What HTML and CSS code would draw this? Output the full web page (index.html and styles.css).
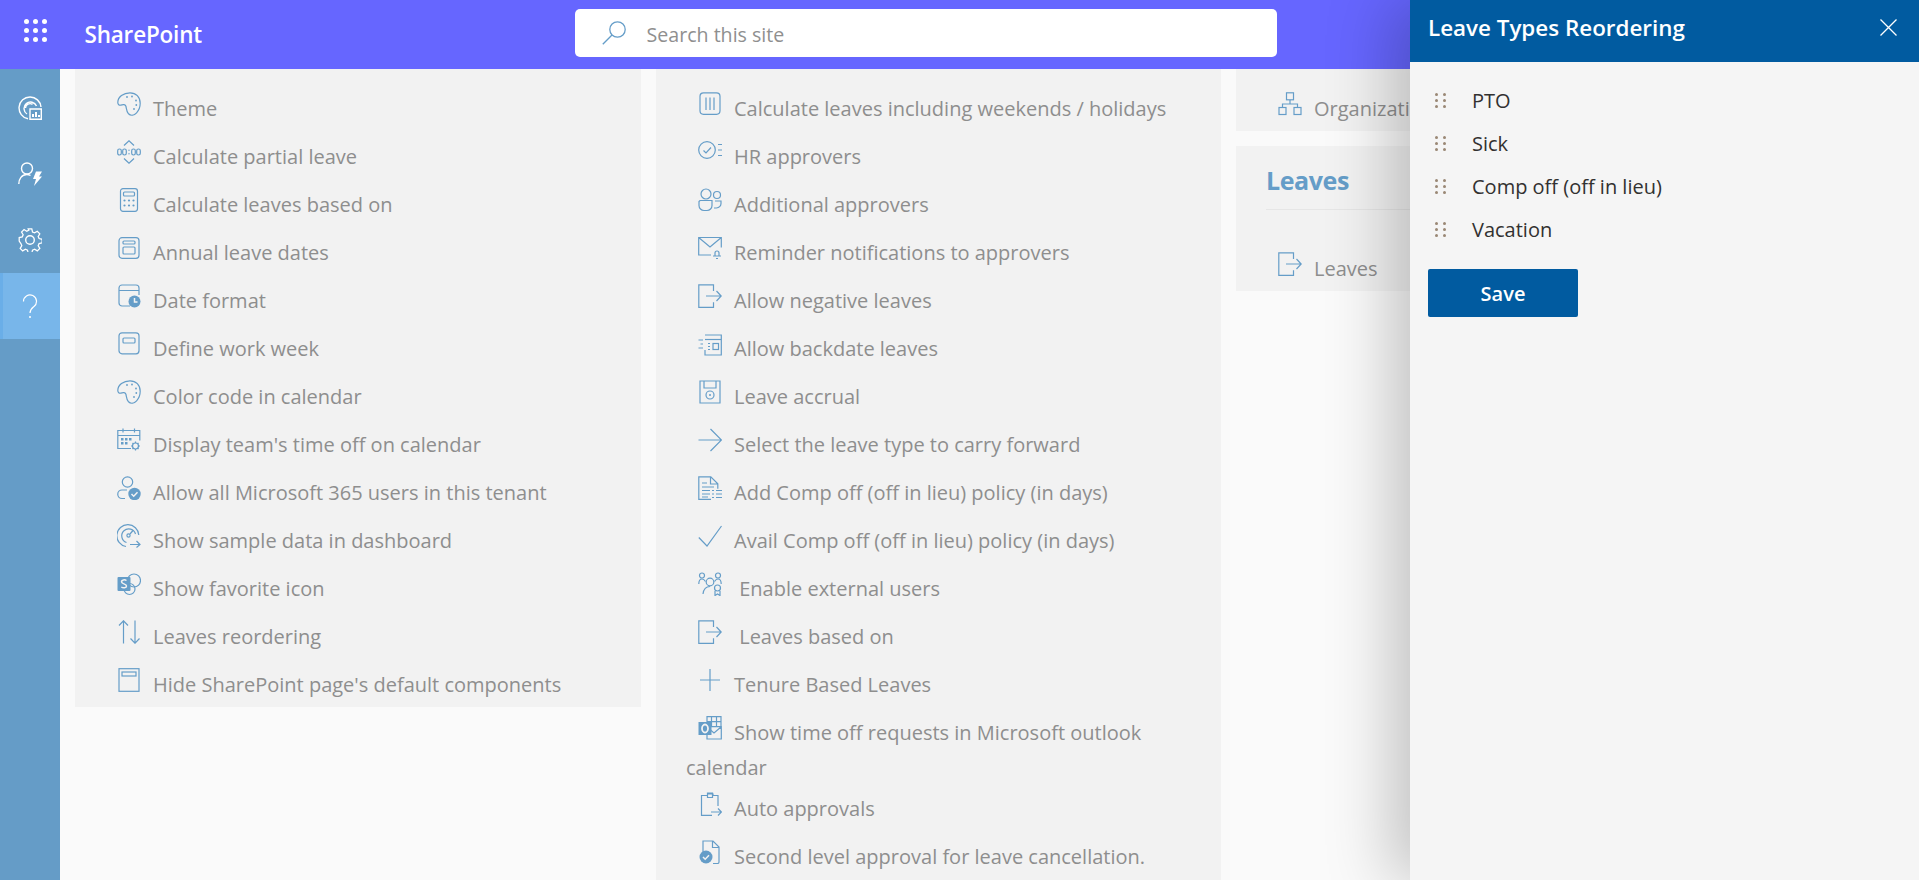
FILE: index.html
```html
<!DOCTYPE html>
<html>
<head>
  <title>Leave Types Reordering</title>
  <link rel="stylesheet" href="styles.css">
</head>
<body>
  <svg class="sprite" width="0" height="0">
    <defs>
      <symbol id="i-palette" viewBox="0 0 24 24"><path d="M13 .8C6.500.8.800 4.600.800 10.500c0 2 1.500 3.200 3 2.600 2.300-.9 4.700-.8 5.200 1.400.5 2.300.5 5.300 2.500 7.300 2.300 2.200 5.600 1.600 8.100-1 2.600-2.800 3.600-6.200 3.600-9.500C23.200 5 19 .8 13 .8z"/><circle class="dot" cx="10" cy="5" r=".9"/><circle class="dot" cx="15" cy="4.500" r=".9"/><circle class="dot" cx="19" cy="8.500" r=".9"/><circle class="dot" cx="19.300" cy="13" r=".9"/><circle class="dot" cx="17" cy="17" r=".9"/></symbol>
      <symbol id="i-time" viewBox="0 0 24 24"><path d="M7 5.500 12 .8l5 4.700M7 18.500l5 4.700 5-4.700"/><rect x=".7" y="9" width="3.600" height="6" rx="1.700"/><rect x="5.700" y="9" width="3.600" height="6" rx="1.700"/><rect x="14.700" y="9" width="3.600" height="6" rx="1.700"/><rect x="19.700" y="9" width="3.600" height="6" rx="1.700"/><circle class="dot" cx="12" cy="10.200" r=".7"/><circle class="dot" cx="12" cy="13.800" r=".7"/></symbol>
      <symbol id="i-calc" viewBox="0 0 24 24"><rect x="3.500" y=".7" width="17" height="22.600" rx="2.500"/><rect x="6.500" y="4" width="11" height="4" rx="1"/><g class="dot"><circle cx="7.500" cy="12.500" r="1.100"/><circle cx="12" cy="12.500" r="1.100"/><circle cx="16.500" cy="12.500" r="1.100"/><circle cx="7.500" cy="17.500" r="1.100"/><circle cx="12" cy="17.500" r="1.100"/><circle cx="16.500" cy="17.500" r="1.100"/></g></symbol>
      <symbol id="i-annual" viewBox="0 0 24 24"><rect x="2" y="1.700" width="20" height="20.600" rx="3"/><rect x="6" y="5" width="12" height="3" rx="1"/><rect x="6" y="11" width="12" height="7" rx="1"/></symbol>
      <symbol id="i-date" viewBox="0 0 24 24"><path d="M13 22H5a3 3 0 0 1-3-3V4a3 3 0 0 1 3-3h14a3 3 0 0 1 3 3v7M2 6.500h20"/><circle class="dot" cx="17.500" cy="17.500" r="6"/><path class="light" d="M17.500 14v4h3"/></symbol>
      <symbol id="i-week" viewBox="0 0 24 24"><rect x="2" y=".8" width="20" height="21" rx="3"/><rect x="6" y="6" width="12" height="5" rx="1"/></symbol>
      <symbol id="i-team" viewBox="0 0 24 24"><path d="M14 20.500H.8V2.500h22v10M.8 7.500h22M6 .5v4M17.500.5v4"/><g class="dot"><rect x="4" y="10" width="2.500" height="2.500"/><rect x="8" y="10" width="2.500" height="2.500"/><rect x="12" y="10" width="2.500" height="2.500"/><rect x="4" y="14" width="2.500" height="2.500"/><rect x="8" y="14" width="2.500" height="2.500"/></g><circle cx="18.500" cy="18" r="3"/><path d="M18.500 13.500v1.500M18.500 21v1.500M14 18h1.500M21.500 18H23M15.500 15l1 1M20.500 20l1 1M21.500 15l-1 1M16.500 20l-1 1"/></symbol>
      <symbol id="i-users" viewBox="0 0 24 24"><circle cx="10.500" cy="6" r="5.200"/><path d="M8 22.500H5a4.200 4.200 0 0 1 0-8.500h5"/><circle class="dot" cx="17.500" cy="18" r="6.200"/><path class="light" d="m14.500 18 2.200 2.200 3.800-4"/></symbol>
      <symbol id="i-gauge" viewBox="0 0 24 24"><path d="M9 22.500A11 11 0 1 1 21.800 11"/><path d="M9.500 18.500A7 7 0 1 1 18.500 10"/><circle cx="11.500" cy="11.500" r="1.600"/><path d="m13 10 3-3.500M13 20.500h10M19.500 17l3.500 3.500-3.500 3"/></symbol>
      <symbol id="i-share" viewBox="0 0 24 24"><rect class="dot" x=".5" y="5" width="13" height="14" rx="1"/><circle cx="17" cy="8.500" r="6.500"/><circle cx="12.500" cy="17" r="5.500"/><path class="light" d="M9.500 8.500C8 7.500 4.500 7.500 4.500 9.800c0 2.400 5 1.700 5 4.200 0 2.200-3.500 2.200-5.200 1"/></symbol>
      <symbol id="i-sort" viewBox="0 0 24 24"><path d="M6.500 23.500V.8M2 5.500 6.500.8 11 5.500M18 .5v22.700M13.500 18.500 18 23.200l4.500-4.700"/></symbol>
      <symbol id="i-page" viewBox="0 0 24 24"><rect x="2" y=".7" width="20" height="22.600"/><rect x="5" y="4" width="14" height="4"/></symbol>
      <symbol id="i-cols" viewBox="0 0 24 24"><rect x="2" y=".8" width="20" height="21.500" rx="3.500"/><path d="M8 5.500v12.500M12 5.500v12.500M16 5.500v12.500"/></symbol>
      <symbol id="i-hr" viewBox="0 0 24 24"><circle cx="9" cy="10" r="8.300"/><path d="m5.500 10.500 2.500 2.500 5-5.500M20 4.500h4M20 10h4M20 15.500h4"/></symbol>
      <symbol id="i-people" viewBox="0 0 24 24"><circle cx="8" cy="6" r="5"/><circle cx="19" cy="7" r="3.500"/><path d="M2 12.500h12v5a5 5 0 0 1-5 5H6a5 5 0 0 1-5-5v-4zM17 13h6v2.500a4.500 4.500 0 0 1-4.500 4.500H16"/></symbol>
      <symbol id="i-mail" viewBox="0 0 24 24"><path d="M13 19H.7V1.500h22.600v10M.7 1.500 12 11 23.300 1.500"/><path d="M15 20h8M17 20v-3a2 2 0 0 1 4 0v3M18 22.500h2"/></symbol>
      <symbol id="i-out" viewBox="0 0 24 24"><path d="M15.500 7V.8H.8v22.500h14.700v-5M8 12h15M18.500 7l4.700 5-4.700 5"/></symbol>
      <symbol id="i-back" viewBox="0 0 24 24"><path d="M7 3h16.300v20H7v-5"/><path d="M7 7.500h16.300"/><rect x="15" y="11.500" width="5.500" height="6"/><path d="M.5 8H5M2.500 12H5M.5 16H5M10 11.500h2M10 14.500h2M10 17.500h2"/></symbol>
      <symbol id="i-save" viewBox="0 0 24 24"><path d="M2 1v22h20V1z"/><path d="M6 1v7h12V1"/><circle cx="12" cy="15" r="4"/><circle class="dot" cx="12" cy="15" r="1"/></symbol>
      <symbol id="i-arrow" viewBox="0 0 24 24"><path d="M.5 12h23M12.500 1l11 11-11 11"/></symbol>
      <symbol id="i-doc" viewBox="0 0 24 24"><path d="M13 23.300H.8V.8h12l7 7v5M12.500 1v7h7M4 7h5M4 11h12M4 14.500h8M4 18h8M4 21h6M14 14.500h2M18 14.500h6M14 18h2M18 18h6M14 21.500h2M18 21.500h6"/></symbol>
      <symbol id="i-check" viewBox="0 0 24 24"><path d="M.8 13.500 9 22 23.500 2"/></symbol>
      <symbol id="i-ext" viewBox="0 0 24 24"><circle cx="4" cy="3.500" r="2.500"/><circle cx="20" cy="3.500" r="2.500"/><circle cx="12" cy="10" r="3.800"/><circle cx="19.500" cy="16" r="3"/><path d="M.8 12c0-3 1.200-5 3.200-5 1.500 0 2.500.8 3.500 2.500M23.200 12c0-3-1.200-5-3.200-5-1.500 0-2.500.8-3.500 2.500M5 22c.5-4 2.500-7.500 7-7.500M17 19v4.500l2.500-1.500 2.500 1.500V19"/></symbol>
      <symbol id="i-plus" viewBox="0 0 24 24"><path d="M12 1v22M2 12h20"/></symbol>
      <symbol id="i-outlook" viewBox="0 0 24 24"><path d="M9 .7h14v10H9zM13.500.7v10M18.500.7v10M9 5.700h14M23.300 10v13H9v-4M9 11l7 6 7-6"/><rect class="dot" x=".5" y="6" width="13" height="13"/><ellipse class="lightline" cx="7" cy="12.500" rx="3" ry="4"/></symbol>
      <symbol id="i-clip" viewBox="0 0 24 24"><path d="M20 14V3.500h-5V2H9.500v1.500h-6V23.300H14M9.500 1h5v4.500h-5zM13 20h10.300M20 16.500l3.500 3.500-3.500 3.500"/></symbol>
      <symbol id="i-docok" viewBox="0 0 24 24"><path d="M5 12V1h10l6 6v15a1.500 1.500 0 0 1-1.500 1.500H15M14.500 1v6.500H21"/><circle class="dot" cx="8" cy="17" r="6.500"/><path class="light" d="m5 17 2.200 2.200 3.800-4"/></symbol>
      <symbol id="i-org" viewBox="0 0 24 24"><rect x="8.500" y=".8" width="7" height="7"/><rect x="1" y="15.500" width="7" height="7"/><rect x="16" y="15.500" width="7" height="7"/><path d="M12 8v4M4.500 15.500V12h15v3.500"/></symbol>
    </defs>
  </svg>

  <header class="topbar">
    <div class="waffle">
      <span></span><span></span><span></span><span></span><span></span><span></span><span></span><span></span><span></span>
    </div>
    <div class="brand">SharePoint</div>
    <div class="search">
      <svg class="search-icon" viewBox="0 0 24 24"><circle cx="15.500" cy="8.500" r="7.700"/><path d="M10 14 .8 23.300"/></svg>
      <span>Search this site</span>
    </div>
  </header>

  <div class="main">
    <nav class="sidenav">
      <div class="nav-item">
        <svg viewBox="0 0 24 24"><path d="M10 22.800A11 11 0 1 1 23 11M9 18A6.500 6.500 0 1 1 18.500 10M7.500 12a4.500 4.500 0 0 1 7-3.600"/><path d="M12 13h11.300v10.300H12z"/><path class="fat" d="M15 21v-3M18 21v-5M21 21v-2"/></svg>
      </div>
      <div class="nav-item">
        <svg viewBox="0 0 24 24"><circle cx="9" cy="6.500" r="5.500"/><path d="M.8 22c0-5 3-9.500 8-9.500 1.500 0 2.700.4 3.700 1"/><path class="solid" d="M18 9.500h6l-3 5h3l-8 9.500 2-7h-3z"/></svg>
      </div>
      <div class="nav-item">
        <svg viewBox="0 0 24 24"><path d="M10 .8h4l.8 3.400 2.300 1 3-1.800 2.800 2.800-1.800 3 1 2.300 3.400.8v4l-3.400.8-1 2.300 1.800 3-2.800 2.800-3-1.800-2.300 1-.8 3.400h-4l-.8-3.400-2.300-1-3 1.800-2.800-2.800 1.800-3-1-2.300L0 14.400v-4l3.400-.8 1-2.300-1.800-3 2.800-2.800 3 1.800 2.300-1z" transform="translate(1.200 .2) scale(.9)"/><circle cx="12" cy="12" r="4.300"/></svg>
      </div>
      <div class="nav-item active">
        <svg class="help" viewBox="0 0 24 24"><path d="M5.500 7.500a6.500 6.500 0 1 1 10.500 5c-2.500 2-4 3-4 6.500"/><circle class="solid" cx="12" cy="23" r="1"/></svg>
      </div>
    </nav>

    <div class="content">
      <section class="col">
        <div class="card list-card">
          <div class="item"><svg class="ico"><use href="#i-palette"/></svg>Theme</div>
          <div class="item"><svg class="ico"><use href="#i-time"/></svg>Calculate partial leave</div>
          <div class="item"><svg class="ico"><use href="#i-calc"/></svg>Calculate leaves based on</div>
          <div class="item"><svg class="ico"><use href="#i-annual"/></svg>Annual leave dates</div>
          <div class="item"><svg class="ico"><use href="#i-date"/></svg>Date format</div>
          <div class="item"><svg class="ico"><use href="#i-week"/></svg>Define work week</div>
          <div class="item"><svg class="ico"><use href="#i-palette"/></svg>Color code in calendar</div>
          <div class="item"><svg class="ico"><use href="#i-team"/></svg>Display team's time off on calendar</div>
          <div class="item"><svg class="ico"><use href="#i-users"/></svg>Allow all Microsoft 365 users in this tenant</div>
          <div class="item"><svg class="ico"><use href="#i-gauge"/></svg>Show sample data in dashboard</div>
          <div class="item"><svg class="ico"><use href="#i-share"/></svg>Show favorite icon</div>
          <div class="item"><svg class="ico"><use href="#i-sort"/></svg>Leaves reordering</div>
          <div class="item"><svg class="ico"><use href="#i-page"/></svg>Hide SharePoint page's default components</div>
        </div>
      </section>

      <section class="col">
        <div class="card list-card">
          <div class="item"><svg class="ico"><use href="#i-cols"/></svg>Calculate leaves including weekends / holidays</div>
          <div class="item"><svg class="ico"><use href="#i-hr"/></svg>HR approvers</div>
          <div class="item"><svg class="ico"><use href="#i-people"/></svg>Additional approvers</div>
          <div class="item"><svg class="ico"><use href="#i-mail"/></svg>Reminder notifications to approvers</div>
          <div class="item"><svg class="ico"><use href="#i-out"/></svg>Allow negative leaves</div>
          <div class="item"><svg class="ico"><use href="#i-back"/></svg>Allow backdate leaves</div>
          <div class="item"><svg class="ico"><use href="#i-save"/></svg>Leave accrual</div>
          <div class="item"><svg class="ico"><use href="#i-arrow"/></svg>Select the leave type to carry forward</div>
          <div class="item"><svg class="ico"><use href="#i-doc"/></svg>Add Comp off (off in lieu) policy (in days)</div>
          <div class="item"><svg class="ico"><use href="#i-check"/></svg>Avail Comp off (off in lieu) policy (in days)</div>
          <div class="item"><svg class="ico"><use href="#i-ext"/></svg>&nbsp;Enable external users</div>
          <div class="item"><svg class="ico"><use href="#i-out"/></svg>&nbsp;Leaves based on</div>
          <div class="item"><svg class="ico"><use href="#i-plus"/></svg>Tenure Based Leaves</div>
          <div class="item"><svg class="ico"><use href="#i-outlook"/></svg>Show time off requests in Microsoft outlook calendar</div>
          <div class="item tight"><svg class="ico"><use href="#i-clip"/></svg>Auto approvals</div>
          <div class="item"><svg class="ico"><use href="#i-docok"/></svg>Second level approval for leave cancellation.</div>
        </div>
      </section>

      <section class="col">
        <div class="card org-card">
          <div class="item"><svg class="ico"><use href="#i-org"/></svg>Organization</div>
        </div>
        <div class="card leaves-card">
          <h2>Leaves</h2>
          <div class="item"><svg class="ico"><use href="#i-out"/></svg>Leaves</div>
        </div>
      </section>
    </div>
  </div>

  <aside class="panel">
    <div class="panel-head">
      <span>Leave Types Reordering</span>
      <svg class="close" viewBox="0 0 17 17"><path d="M.5.5l16 16M16.500.5l-16 16"/></svg>
    </div>
    <div class="panel-body">
      <div class="drag-row"><span class="grip"><i></i><i></i><i></i><i></i><i></i><i></i></span>PTO</div>
      <div class="drag-row"><span class="grip"><i></i><i></i><i></i><i></i><i></i><i></i></span>Sick</div>
      <div class="drag-row"><span class="grip"><i></i><i></i><i></i><i></i><i></i><i></i></span>Comp off (off in lieu)</div>
      <div class="drag-row"><span class="grip"><i></i><i></i><i></i><i></i><i></i><i></i></span>Vacation</div>
      <button class="save">Save</button>
    </div>
  </aside>
</body>
</html>
```

FILE: styles.css
```css
* {
  box-sizing: border-box;
}

html,
body {
  height: 880px;
  margin: 0;
  overflow: hidden;
}

body {
  font-family: "Open Sans", "Noto Sans", sans-serif;
  background-color: #fafafa;
  color: #8e8e8e;
}

.sprite {
  position: absolute;
}

/* Top bar */
.topbar {
  display: flex;
  align-items: center;
  height: 69px;
  background-color: #6666ff;
  color: white;
}

.waffle {
  display: grid;
  grid-template-columns: repeat(3, 5px);
  gap: 4px;
  width: 23px;
  margin-left: 24px;
  margin-right: 37.500px;
  margin-top: -8px;
}

.waffle span {
  width: 5px;
  height: 5px;
  border-radius: 50%;
  background-color: white;
}

.brand {
  width: 490px;
  font-size: 22.500px;
  font-weight: 600;
  letter-spacing: -0.2px;
}

.search {
  display: flex;
  align-items: center;
  width: 702px;
  height: 48px;
  padding-left: 27px;
  margin-top: -3px;
  background-color: white;
  border-radius: 5px;
  color: #8f8f8f;
  font-size: 19.600px;
}

.search span {
  padding-top: 2px;
}

.search-icon {
  width: 24px;
  height: 24px;
  margin-right: 21px;
  fill: none;
  stroke: #659dc8;
  stroke-width: 1.300;
}

/* Side nav */
.main {
  display: flex;
  height: 811px;
}

.sidenav {
  flex: none;
  width: 60px;
  padding-top: 6px;
  background-color: #659cc7;
}

.nav-item {
  display: flex;
  align-items: center;
  justify-content: center;
  height: 66px;
}

.nav-item svg {
  width: 24px;
  height: 24px;
  fill: none;
  stroke: white;
  stroke-width: 1.400;
}

.nav-item .fat {
  stroke-width: 2;
}

.nav-item .solid {
  fill: white;
  stroke: none;
}

.nav-item.active {
  background-color: #78b6ea;
  border-left: 3px solid #6aaee8;
  padding-right: 3px;
}

.nav-item .help {
  stroke-width: 1.200;
}

/* Columns */
.content {
  display: flex;
  flex: 1;
  gap: 15px;
  padding-left: 15px;
  overflow: hidden;
}

.col {
  flex: none;
  width: 566px;
}

.col:nth-child(2) {
  width: 565px;
}

.col:nth-child(2) .list-card {
  padding-bottom: 20px;
}

.card {
  background-color: #f2f2f2;
  padding: 0 30px;
}

.list-card {
  padding-top: 9px;
  padding-bottom: 5px;
}

.item {
  padding-top: 13px;
  font-size: 20px;
  line-height: 35px;
}

.item.tight {
  padding-top: 6px;
}

.ico {
  width: 24px;
  height: 24px;
  margin: 0 12px;
  vertical-align: 0;
  overflow: visible;
  fill: none;
  stroke: #659dc8;
  stroke-width: 1.200;
}

.dot,
.dot * {
  fill: #659dc8;
  stroke: none;
}

.light {
  fill: none;
  stroke: #f2f2f2;
  stroke-width: 1.500;
}

.lightline {
  fill: none;
  stroke: #f2f2f2;
  stroke-width: 1.800;
}

.org-card {
  height: 62px;
  padding-top: 9px;
  margin-bottom: 15px;
}

.leaves-card {
  height: 145px;
  padding-top: 17px;
}

.leaves-card h2 {
  height: 47px;
  margin: 0;
  border-bottom: 1px solid #e6e6e6;
  color: #659dc8;
  font-size: 25px;
  font-weight: 700;
  line-height: 35px;
  letter-spacing: -0.4px;
}

.leaves-card .item {
  padding-top: 41px;
}

/* Reorder panel */
.panel {
  position: absolute;
  top: 0;
  right: 0;
  width: 509px;
  height: 880px;
  background-color: #f5f5f5;
  box-shadow: -20px 0 60px rgba(0, 0, 0, 0.22);
}

.panel-head {
  display: flex;
  align-items: center;
  justify-content: space-between;
  height: 62px;
  padding: 0 22px 7px 18px;
  background-color: #015ba0;
  color: white;
  font-size: 22.400px;
  font-weight: 600;
}

.close {
  width: 17px;
  height: 17px;
  fill: none;
  stroke: white;
  stroke-width: 1.300;
}

.panel-body {
  padding: 17px 18px;
}

.drag-row {
  display: flex;
  align-items: center;
  height: 43px;
  color: #323130;
  font-size: 20px;
}

.grip {
  display: grid;
  grid-template-columns: repeat(2, 3px);
  gap: 3px 5px;
  width: 11px;
  margin-left: 7px;
  margin-right: 26px;
}

.grip i {
  width: 3px;
  height: 3px;
  border-radius: 50%;
  background-color: #9a8875;
}

.save {
  display: block;
  width: 150px;
  height: 48px;
  margin-top: 18px;
  border: none;
  border-radius: 2px;
  background-color: #015ba0;
  color: white;
  font-family: inherit;
  font-size: 20px;
  font-weight: 600;
  cursor: pointer;
}
```
